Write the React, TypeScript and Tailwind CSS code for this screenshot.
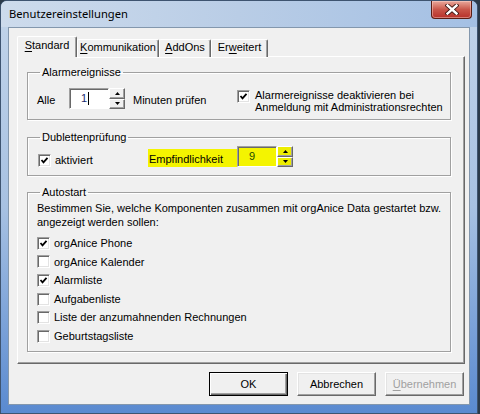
import React from "react";

const tabs = [
  { pre: "", acc: "S", post: "tandard", w: "w-[60px]", active: true },
  { pre: "", acc: "K", post: "ommunikation", w: "w-[82px]", active: false },
  { pre: "", acc: "A", post: "ddOns", w: "w-[52px]", active: false },
  { pre: "Er", acc: "w", post: "eitert", w: "w-[57px]", active: false },
];

const autostart = [
  { label: "orgAnice Phone", checked: true },
  { label: "orgAnice Kalender", checked: false },
  { label: "Alarmliste", checked: true },
  { label: "Aufgabenliste", checked: false },
  { label: "Liste der anzumahnenden Rechnungen", checked: false },
  { label: "Geburtstagsliste", checked: false },
];

const Check = ({ checked }: { checked: boolean }) => (
  <span className="w-[13px] h-[13px] shrink-0 bg-white border border-t-[#a0a0a0] border-l-[#a0a0a0] border-b-white border-r-white shadow-[inset_1px_1px_0_#696969,inset_-1px_-1px_0_#e3e3e3] flex items-center justify-center">
    {checked && (
      <svg width="9" height="9" viewBox="0 0 9 9">
        <path d="M1.5 4 L3.5 6.3 L7.5 1.8" fill="none" stroke="#000" strokeWidth="1.8" />
      </svg>
    )}
  </span>
);

const Arrow = ({ up }: { up: boolean }) => (
  <svg width="5" height="3" viewBox="0 0 5 3">
    <path d={up ? "M0 3 L2.5 0 L5 3 Z" : "M0 0 L5 0 L2.5 3 Z"} fill="#000" />
  </svg>
);

const Spin = ({ yellow }: { yellow?: boolean }) => (
  <div className="flex flex-col w-[16px] h-[21px]">
    {[true, false].map((up) => (
      <span
        key={String(up)}
        className={
          "flex-1 flex items-center justify-center border border-t-white border-l-white border-b-[#696969] border-r-[#696969] shadow-[inset_-1px_-1px_0_#a0a0a0] " +
          (yellow ? "bg-[#eded00] border-t-[#fbfb80] border-l-[#fbfb80] border-b-[#6a6a00] border-r-[#6a6a00]" : "bg-[#f0f0f0]")
        }
      >
        <Arrow up={up} />
      </span>
    ))}
  </div>
);

const SpinBox = ({ value, caret, yellow }: { value: string; caret?: boolean; yellow?: boolean }) => (
  <div className="flex items-start">
    <div
      className={
        "w-[40px] h-[21px] flex items-center pl-[11px] border border-t-[#a0a0a0] border-l-[#a0a0a0] border-b-white border-r-white shadow-[inset_1px_1px_0_#696969] " +
        (yellow ? "bg-[#f4f400] border-b-[#f4f400] border-r-[#c8c800]" : "bg-white")
      }
    >
      <span className={yellow ? "text-[#1a4a00]" : "text-[#1b2a6e]"}>{value}</span>
      {caret && <span className="w-px h-[13px] bg-black ml-px" />}
    </div>
    <Spin yellow={yellow} />
  </div>
);

const Group = ({ title, className, children }: { title: string; className: string; children: React.ReactNode }) => (
  <fieldset className={"w-[424px] border border-[#a0a0a0] shadow-[inset_1px_1px_0_#fff,1px_1px_0_#fff] " + className}>
    <legend className="ml-[12px] px-[2px] leading-[13px]">{title}</legend>
    {children}
  </fieldset>
);

const Button = ({ children, primary, disabled }: { children: React.ReactNode; primary?: boolean; disabled?: boolean }) => (
  <div
    className={
      "w-[79px] h-[24px] flex items-center justify-center bg-[#f0f0f0] " +
      (primary
        ? "border border-black shadow-[inset_1px_1px_0_#fff,inset_-1px_-1px_0_#696969,inset_-2px_-2px_0_#a0a0a0]"
        : "border border-t-white border-l-white border-b-[#696969] border-r-[#696969] shadow-[inset_-1px_-1px_0_#a0a0a0,inset_1px_1px_0_#e3e3e3]") +
      (disabled ? " text-[#a0a0a0]" : " text-black")
    }
  >
    {children}
  </div>
);

export default function App() {
  return (
    <div className="w-[480px] h-[414px] bg-[#2b3a4a] font-['Liberation_Sans',Arial,sans-serif] text-[11px] text-black">
      <div className="w-[478px] h-[414px] flex flex-col rounded-t-[7px] border border-[#3e5470] bg-gradient-to-b from-[#c3d5ea] via-[#a7c1e2] to-[#5a8ad0]">
        {/* title bar */}
        <div className="h-[26px] shrink-0 flex items-start bg-gradient-to-r from-[#cddbec] via-[#b9cde6] to-[#a4c0e4] rounded-t-[6px]">
          <span className="pl-[8px] pt-[5px] text-[11.2px] leading-[15px] font-['Noto_Sans',sans-serif] text-black">Benutzereinstellungen</span>
          <div className="ml-auto mr-[5px] w-[41px] h-[18px] flex items-center justify-center rounded-b-[4px] border border-t-0 border-[#5b1d14] bg-gradient-to-b from-[#e9a89c] via-[#c9564a] to-[#b7302a] shadow-[inset_0_0_0_1px_rgba(255,220,210,0.45)]">
            <svg width="14" height="11" viewBox="0 0 14 11">
              <path d="M2.5 1.5 L11.5 9.5 M11.5 1.5 L2.5 9.5" stroke="#3b1410" strokeWidth="4.2" strokeLinecap="square" />
              <path d="M2.5 1.5 L11.5 9.5 M11.5 1.5 L2.5 9.5" stroke="#fff" strokeWidth="2.4" strokeLinecap="square" />
            </svg>
          </div>
        </div>

        {/* client area */}
        <div className="mx-[7px] mb-[8px] flex-1 flex flex-col bg-[#f0f0f0] border border-[#8397ad] pl-[8px] pt-[8px]">
          {/* tab strip */}
          <div className="flex items-end h-[21px] -mb-px relative z-10">
            {tabs.map((t) => (
              <div
                key={t.acc + t.post}
                className={
                  t.w +
                  " flex justify-center bg-[#f0f0f0] border-t border-l border-t-white border-l-white border-r border-r-[#696969] rounded-t-[2px] " +
                  (t.active ? "h-[21px] pt-[2px] shadow-[inset_-1px_0_0_#a0a0a0]" : "h-[18px] pt-[1px] shadow-[inset_-1px_0_0_#a0a0a0,0_1px_0_#fff]")
                }
              >
                <span className="leading-[13px]">
                  {t.pre}
                  <span className="underline underline-offset-[2px]">{t.acc}</span>
                  {t.post}
                </span>
              </div>
            ))}
          </div>

          {/* tab panel */}
          <div className="w-[448px] h-[308px] flex flex-col border border-t-white border-l-white border-b-[#696969] border-r-[#696969] shadow-[inset_-1px_-1px_0_#a0a0a0] pl-[9px] pt-[9px]">
            <Group title="Alarmereignisse" className="h-[54px]">
              <div className="flex items-start pl-[9px] pt-[9px]">
                <span className="mt-[4px] w-[32px]">Alle</span>
                <SpinBox value="1" caret />
                <span className="ml-[8px] mt-[4px] w-[104px]">Minuten prüfen</span>
                <div className="flex items-start mt-[2px]">
                  <Check checked />
                  <span className="ml-[5px] leading-[12px] -mt-[1px]">
                    Alarmereignisse deaktivieren bei
                    <br />
                    Anmeldung mit Administrationsrechten
                  </span>
                </div>
              </div>
            </Group>

            <Group title="Dublettenprüfung" className="h-[45px] mt-[11px]">
              <div className="flex items-start pl-[10px] pt-[1px]">
                <div className="flex items-center mt-[7px] w-[110px]">
                  <Check checked />
                  <span className="ml-[4px]">aktiviert</span>
                </div>
                <div className="flex items-start bg-[#f4f400] h-[18px] mt-[4px] pl-[1px]">
                  <span className="w-[88px] mt-[2px]">Empfindlichkeit</span>
                  <div className="-mt-[3px]">
                    <SpinBox value="9" yellow />
                  </div>
                </div>
              </div>
            </Group>

            <Group title="Autostart" className="h-[166px] mt-[10px]">
              <div className="pl-[9px] pt-[2px]">
                <p className="leading-[14px]">
                  Bestimmen Sie, welche Komponenten zusammen mit orgAnice Data gestartet bzw.
                  <br />
                  angezeigt werden sollen:
                </p>
                <div className="mt-[5px] flex flex-col">
                  {autostart.map((a) => (
                    <div key={a.label} className="h-[18.6px] flex items-center">
                      <Check checked={a.checked} />
                      <span className="ml-[4px]">{a.label}</span>
                    </div>
                  ))}
                </div>
              </div>
            </Group>
          </div>

          {/* buttons */}
          <div className="w-[447px] flex justify-end gap-[9px] mt-[8px]">
            <Button primary>OK</Button>
            <Button>Abbrechen</Button>
            <Button disabled>
              <span className="underline underline-offset-[2px]">Ü</span>bernehmen
            </Button>
          </div>
        </div>
      </div>
    </div>
  );
}
